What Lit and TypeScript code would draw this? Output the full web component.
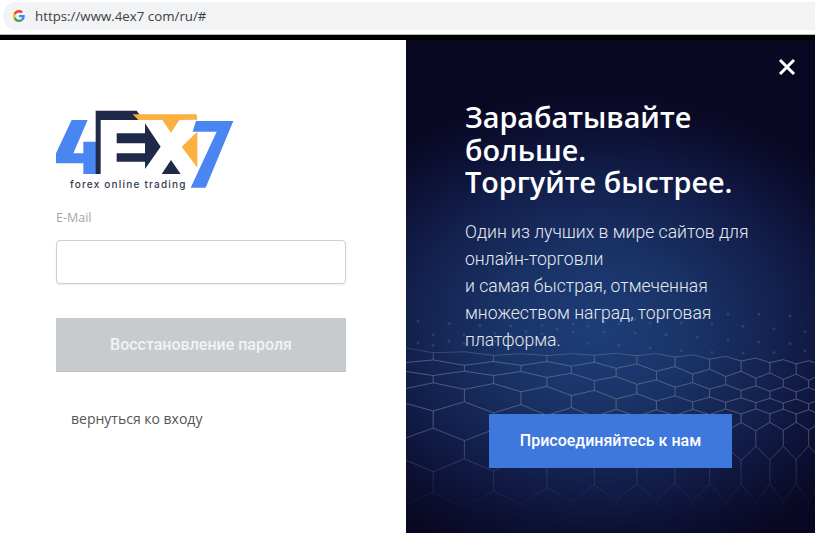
import { LitElement, html, css, svg } from "lit";
import { customElement } from "lit/decorators.js";

const PW = 409, PH = 493;
const LEFT_ROWS = [308, 318, 330, 345, 368, 397, 425, 457, 495, 535];
const RIGHT_ROWS = [320, 337, 350, 363, 373, 385, 410, 450, 500, 550];
const rowAt = (table: number[], t: number) => {
  const c = Math.max(0, Math.min(table.length - 1.001, t));
  const i = Math.floor(c);
  return table[i] + (table[i + 1] - table[i]) * (c - i);
};
function mesh() {
  const project = (u: number, t: number): [number, number] => {
    const x = u / (1 + u / 1000);
    const k = Math.max(0, Math.min(1, x / PW));
    const a = rowAt(LEFT_ROWS, t);
    const b = rowAt(RIGHT_ROWS, t);
    const wave = 3 * Math.sin(x / 55 + t) * (1 - k * 0.6);
    return [x, a + (b - a) * k + wave];
  };
  const w = 68;
  let d = "";
  let dots = "";
  const pt = (i: number, j: number) => {
    const off = (i + j) % 2 === 0 ? 0.2 : -0.2;
    return project(i * w * 0.5 - 40, j + off);
  };
  const fmt = (p: [number, number]) => `${p[0].toFixed(1)} ${p[1].toFixed(1)}`;
  for (let j = 0; j < 9; j++) {
    for (let i = 0; i < 60; i++) {
      const a = pt(i, j);
      const b = pt(i + 1, j);
      d += `M${fmt(a)}L${fmt(b)}`;
      if ((i + j) % 2 === 0) {
        d += `M${fmt(a)}L${fmt(pt(i, j + 1))}`;
      }
    }
  }
  for (let r = 0; r < 4; r++) {
    for (let c = 0; c < 13; c++) {
      const x = 12 + c * 31 + (r % 2) * 15;
      const y = 280 + r * 9 + 6 * Math.sin(x / 70 + r);
      dots += `M${x} ${y.toFixed(1)}h.01`;
    }
  }
  return { d, dots };
}
const M = mesh();

@customElement("app-root")
export class AppRoot extends LitElement {
  static styles = css`
    :host { display: block; width: 815px; height: 533px; overflow: hidden; background: #fff; font-family: "Roboto", "Liberation Sans", sans-serif; }
    .top { background: #fff; padding: 2px 0 4px 3px; box-sizing: border-box; border-bottom: 1px solid #bbb; height: 35px; }
    .pill { height: 28px; background: #f1f3f4; border-radius: 14px 0 0 14px; display: flex; align-items: center; padding-left: 10px; gap: 10px; }
    .url { font: 400 13.3px "Open Sans", sans-serif; color: #3c4043; }
    .black { height: 5px; background: #000; }
    .main { display: flex; height: 493px; }
    .left { width: 406px; flex: none; padding: 70px 60px 0 56px; box-sizing: border-box; display: flex; flex-direction: column; align-items: stretch; }
    .logo { display: block; width: 180px; height: 80px; }
    .label { font: 400 12.5px "Open Sans", sans-serif; color: #a6a6a6; margin-top: 19px; line-height: 18px; }
    .input { height: 44px; border: 1px solid #cfcfcf; border-radius: 4px; box-sizing: border-box; margin-top: 13px; box-shadow: 0 1px 2px rgba(0,0,0,.08); background: #fff; }
    .btn { height: 54px; background: #c8cbcd; color: #f1f3f4; font: 500 16px "Roboto", sans-serif; display: flex; align-items: center; justify-content: center; margin-top: 34px; border-bottom: 1px solid #bfc2c4; box-sizing: border-box; }
    .back { margin: 37px 0 0 15px; font: 400 14px "Open Sans", sans-serif; color: #555; line-height: 20px; }
    .right { position: relative; flex: 1; overflow: hidden; color: #fff; padding: 61px 40px 0 59px; box-sizing: border-box;
      background: radial-gradient(ellipse 310px 240px at 190px 290px, #1e3d78 0%, #1a3468 30%, #13214f 60%, #0c0f31 85%, #090822 100%), #090822; }
    .mesh { position: absolute; left: 0; top: 0; -webkit-mask-image: linear-gradient(to bottom, transparent 60%, #000 65%, #000 78%, transparent 96%); mask-image: linear-gradient(to bottom, transparent 60%, #000 65%, #000 78%, transparent 96%); }
    .mesh .ln { fill: none; stroke: #8a92a8; stroke-width: .9; opacity: .55; }
    .dots { position: absolute; left: 0; top: 0; filter: blur(.7px); }
    .dots path { fill: none; stroke: #5b80b8; stroke-width: 3; stroke-linecap: round; opacity: .28; }
    .close { position: absolute; left: 372px; top: 18px; width: 18px; height: 18px; }
    h1 { position: relative; margin: 0; font: 600 28.8px/32.5px "Open Sans", sans-serif; }
    p { position: relative; margin: 20px 0 0; font: 300 17.6px/27px "Roboto", sans-serif; color: #e6e9f0; }
    .join { position: relative; width: 243px; height: 54px; margin: 60px 0 0 24px; background: #3f78dc; display: flex; align-items: center; justify-content: center; font: 500 16px "Roboto", sans-serif; color: #fff; }
  `;
  render() {
    return html`
      <div class="top"><div class="pill">
        <svg width="12" height="12" viewBox="0 0 48 48"><path fill="#EA4335" d="M24 9.500c3.500 0 6.700 1.200 9.200 3.600l6.900-6.900C35.900 2.400 30.500 0 24 0 14.600 0 6.500 5.400 2.600 13.200l8 6.200C12.500 13.700 17.800 9.500 24 9.500z"/><path fill="#4285F4" d="M46.900 24.500c0-1.600-.1-3.100-.4-4.500H24v9h12.900c-.6 3-2.200 5.500-4.700 7.200l7.700 6c4.500-4.200 7-10.300 7-17.700z"/><path fill="#FBBC05" d="M10.500 28.600c-.5-1.400-.8-3-.8-4.600s.3-3.200.8-4.600l-8-6.200C.9 16.500 0 20.100 0 24s.9 7.500 2.600 10.800l7.900-6.200z"/><path fill="#34A853" d="M24 48c6.500 0 11.900-2.100 15.900-5.800l-7.700-6c-2.200 1.400-4.900 2.300-8.200 2.300-6.300 0-11.500-4.200-13.500-9.900l-8 6.200C6.500 42.600 14.600 48 24 48z"/></svg>
        <span class="url">https://www.4ex7 com/ru/#</span>
      </div></div>
      <div class="black"></div>
      <div class="main">
        <div class="left">
          <svg class="logo" viewBox="48 45 540 240">
            <polygon fill="#4a86f2" points="95,75 143,75 100,175 130,175 130,140 168,140 168,237 130,237 130,205 48,205 48,175"/>
            <polygon fill="#1f2a48" points="167,47 290,47 310,75 182,75 182,237 167,237"/>
            <polygon fill="#1f2a48" points="230,115 315,115 315,85 362,155 315,222 315,200 230,200 230,175 315,175 315,145 230,145"/>
            <polygon fill="#fbb040" points="278,58 470,58 472,74 418,75 393,113 367,75 295,75"/>
            <polygon fill="#fbb040" points="472,110 425,155 472,218"/>
            <polygon fill="#1f2a48" points="393,195 422,237 365,237"/>
            <polygon fill="#4a86f2" points="468,78 580,78 497,278 452,278 530,110 458,110"/>
            <text x="90" y="279" font-family="Inter, sans-serif" font-weight="500" font-size="30" letter-spacing="3.6" fill="#333a4d">forex online trading</text>
          </svg>
          <div class="label">E-Mail</div>
          <div class="input"></div>
          <div class="btn">Восстановление пароля</div>
          <div class="back">вернуться ко входу</div>
        </div>
        <div class="right">
          <svg class="dots" width="${PW}" height="${PH}" viewBox="0 0 ${PW} ${PH}">${svg`<path d="${M.dots}"/>`}</svg>
          <svg class="mesh" width="${PW}" height="${PH}" viewBox="0 0 ${PW} ${PH}">${svg`<path class="ln" d="${M.d}"/>`}</svg>
          <svg class="close" viewBox="0 0 18 18"><path d="M2 2L16 16M16 2L2 16" stroke="#fff" stroke-width="3" fill="none"/></svg>
          <h1>Зарабатывайте<br>больше.<br>Торгуйте быстрее.</h1>
          <p>Один из лучших в мире сайтов для<br>онлайн-торговли<br>и самая быстрая, отмеченная<br>множеством наград, торговая<br>платформа.</p>
          <div class="join">Присоединяйтесь к нам</div>
        </div>
      </div>
    `;
  }
}
